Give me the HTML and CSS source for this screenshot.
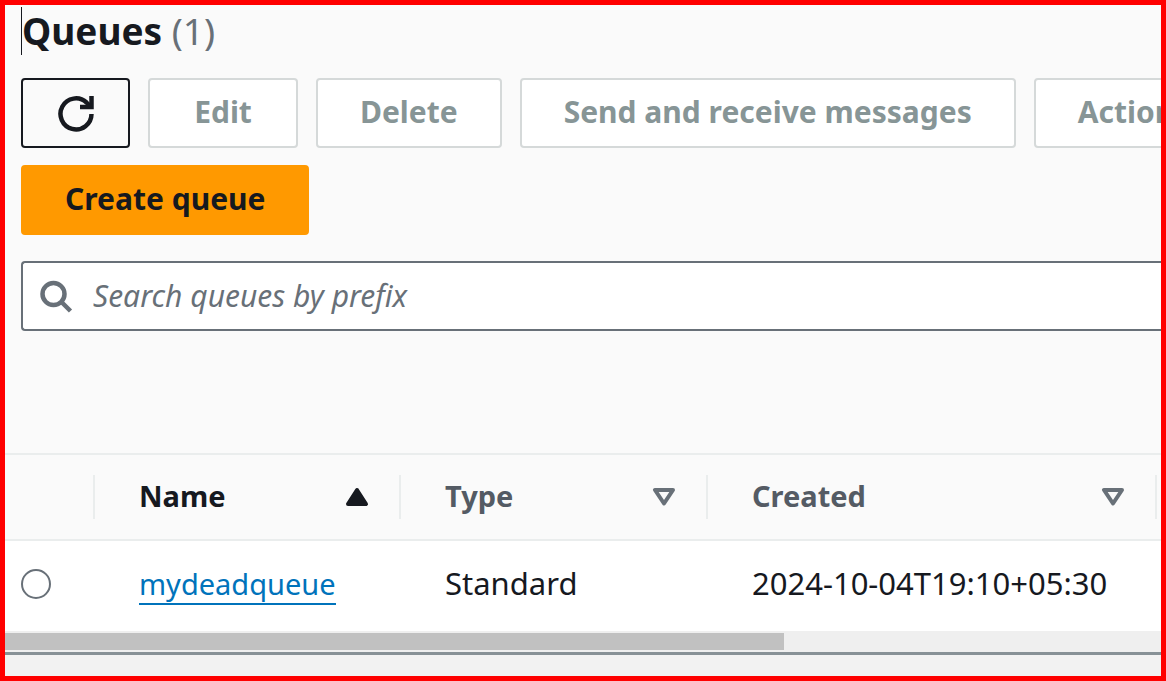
FILE: index.html
```html
<!DOCTYPE html>
<html lang="en">

<head>
    <meta charset="UTF-8">
    <meta name="viewport" content="width=device-width, initial-scale=1.0">
    <title>Queues</title>
    <link rel="stylesheet" href="styles.css">
</head>

<body>

    <main class="panel">
        <!-- Title and actions -->
        <header class="panel-header">
            <h1>Queues <span class="counter">(1)</span></h1>
            <div class="actions">
                <button type="button" class="btn btn-icon" aria-label="Refresh">
                    <svg width="40" height="40" viewBox="0 0 40 40" fill="none" stroke="currentColor" stroke-width="4.500">
                        <path d="M35.500 21A15.500 15.500 0 1 1 30.500 9.500L35 14"/>
                        <path d="M35.500 3V14H24"/>
                    </svg>
                </button>
                <button type="button" class="btn" disabled>Edit</button>
                <button type="button" class="btn" disabled>Delete</button>
                <button type="button" class="btn" disabled>Send and receive messages</button>
                <button type="button" class="btn" disabled>Actions</button>
            </div>
            <div class="actions">
                <button type="button" class="btn btn-primary">Create queue</button>
            </div>
        </header>

        <!-- Search -->
        <div class="search">
            <svg class="search-icon" width="34" height="34" viewBox="0 0 34 34" fill="none" stroke="currentColor" stroke-width="4.500">
                <circle cx="14.500" cy="15" r="11"/>
                <path d="M22 22.500L31.500 32"/>
            </svg>
            <input type="text" placeholder="Search queues by prefix" aria-label="Search queues by prefix">
        </div>

        <!-- Queue list -->
        <div class="table-wrap">
            <table>
                <colgroup>
                    <col class="col-select">
                    <col class="col-name">
                    <col class="col-type">
                    <col class="col-created">
                    <col>
                </colgroup>
                <thead>
                    <tr>
                        <td><div class="head"></div></td>
                        <th class="sorted" scope="col">
                            <div class="head">Name
                                <svg width="24" height="20" viewBox="0 0 24 20" fill="currentColor" stroke="currentColor" stroke-width="4" stroke-linejoin="round">
                                    <path d="M12 4L21 18H3Z"/>
                                </svg>
                            </div>
                        </th>
                        <th scope="col">
                            <div class="head">Type
                                <svg width="24" height="20" viewBox="0 0 24 20" fill="none" stroke="currentColor" stroke-width="4" stroke-linejoin="round">
                                    <path d="M3 4H21L12 17.500Z"/>
                                </svg>
                            </div>
                        </th>
                        <th scope="col">
                            <div class="head">Created
                                <svg width="24" height="20" viewBox="0 0 24 20" fill="none" stroke="currentColor" stroke-width="4" stroke-linejoin="round">
                                    <path d="M3 4H21L12 17.500Z"/>
                                </svg>
                            </div>
                        </th>
                        <td></td>
                    </tr>
                </thead>
                <tbody>
                    <tr>
                        <td class="select"><input type="radio" name="queue" aria-label="mydeadqueue"></td>
                        <td><a href="#">mydeadqueue</a></td>
                        <td>Standard</td>
                        <td>2024-10-04T19:10+05:30</td>
                        <td></td>
                    </tr>
                </tbody>
            </table>
        </div>
        <div class="scrollbar">
            <div class="thumb"></div>
        </div>
    </main>

</body>

</html>
```
FILE: styles.css
```css
* {
    box-sizing: border-box;
}

body {
    margin: 0;
    min-height: 100vh;
    border: 5px solid #ff0000;
    background-color: #f2f2f2;
    color: #16191f;
    font-family: "Noto Sans", "Open Sans", sans-serif;
    font-size: 31px;
    line-height: 44px;
}

.panel {
    background-color: #fafafa;
    border-bottom: 3px solid #879196;
    overflow: hidden;
}

.panel-header {
    padding: 2px 0 0 16px;
}

h1 {
    margin: 0 0 23px;
    border-left: 1px solid #16191f;
    font-size: 37px;
    line-height: 48px;
}

.counter {
    color: #687078;
    font-weight: 400;
}

.actions {
    display: flex;
    gap: 18px;
    margin-bottom: 17px;
}

.btn {
    flex-shrink: 0;
    min-width: 150px;
    height: 70px;
    padding: 0 42px 4px;
    border: 2px solid #d5d9d9;
    border-radius: 4px;
    background-color: #ffffff;
    color: #879596;
    font-family: inherit;
    font-size: 30px;
    font-weight: 700;
}

.btn-icon {
    display: flex;
    align-items: center;
    justify-content: center;
    min-width: 109px;
    padding: 0;
    border-color: #16191f;
    background-color: #fafafa;
    color: #16191f;
}

.btn-primary {
    border-color: #ff9900;
    background-color: #ff9900;
    color: #16191f;
}

/* Search */
.search {
    display: flex;
    align-items: center;
    gap: 20px;
    height: 70px;
    margin: 26px 0 122px 16px;
    padding-left: 16px;
    border: 2px solid #687078;
    border-right: none;
    border-radius: 4px 0 0 4px;
    background-color: #ffffff;
    color: #687078;
}

.search-icon {
    flex-shrink: 0;
}

.search input {
    flex: 1;
    min-width: 0;
    padding: 0 0 2px;
    border: none;
    outline: none;
    background: none;
    font-family: inherit;
    font-size: 30px;
}

.search input::placeholder {
    color: #687078;
    font-style: italic;
}

/* Table */
.table-wrap {
    overflow: hidden;
    border-top: 2px solid #eaeded;
}

table {
    width: 1715px;
    table-layout: fixed;
    border-collapse: separate;
    border-spacing: 0;
}

.col-select {
    width: 90px;
}

.col-name {
    width: 306px;
}

.col-type {
    width: 307px;
}

.col-created {
    width: 449px;
}

thead th,
thead td {
    padding: 20px 0;
    border-bottom: 2px solid #eaeded;
    color: #545b64;
    font-size: 29px;
    text-align: left;
}

.head {
    display: flex;
    align-items: center;
    justify-content: space-between;
    height: 44px;
    padding: 0 30px 2px 44px;
    border-right: 2px solid #eaeded;
}

.head svg {
    color: #687078;
}

thead .sorted,
.sorted svg {
    color: #16191f;
}

tbody td {
    height: 90px;
    padding: 0 0 7px 44px;
    background-color: #ffffff;
    white-space: nowrap;
}

tbody .select {
    padding: 0 0 4px 16px;
}

input[type="radio"] {
    display: block;
    width: 30px;
    height: 30px;
    margin: 0;
    appearance: none;
    border: 2px solid #687078;
    border-radius: 50%;
    background-color: #ffffff;
}

a {
    display: inline-block;
    border-bottom: 2px solid #0073bb;
    color: #0073bb;
    font-size: 29px;
    line-height: 38px;
    text-decoration: none;
}

/* Horizontal scrollbar */
.scrollbar {
    padding: 2px 0;
    background-color: #efefef;
}

.thumb {
    width: 67.4%;
    height: 17px;
    background-color: #c1c1c1;
}
```
